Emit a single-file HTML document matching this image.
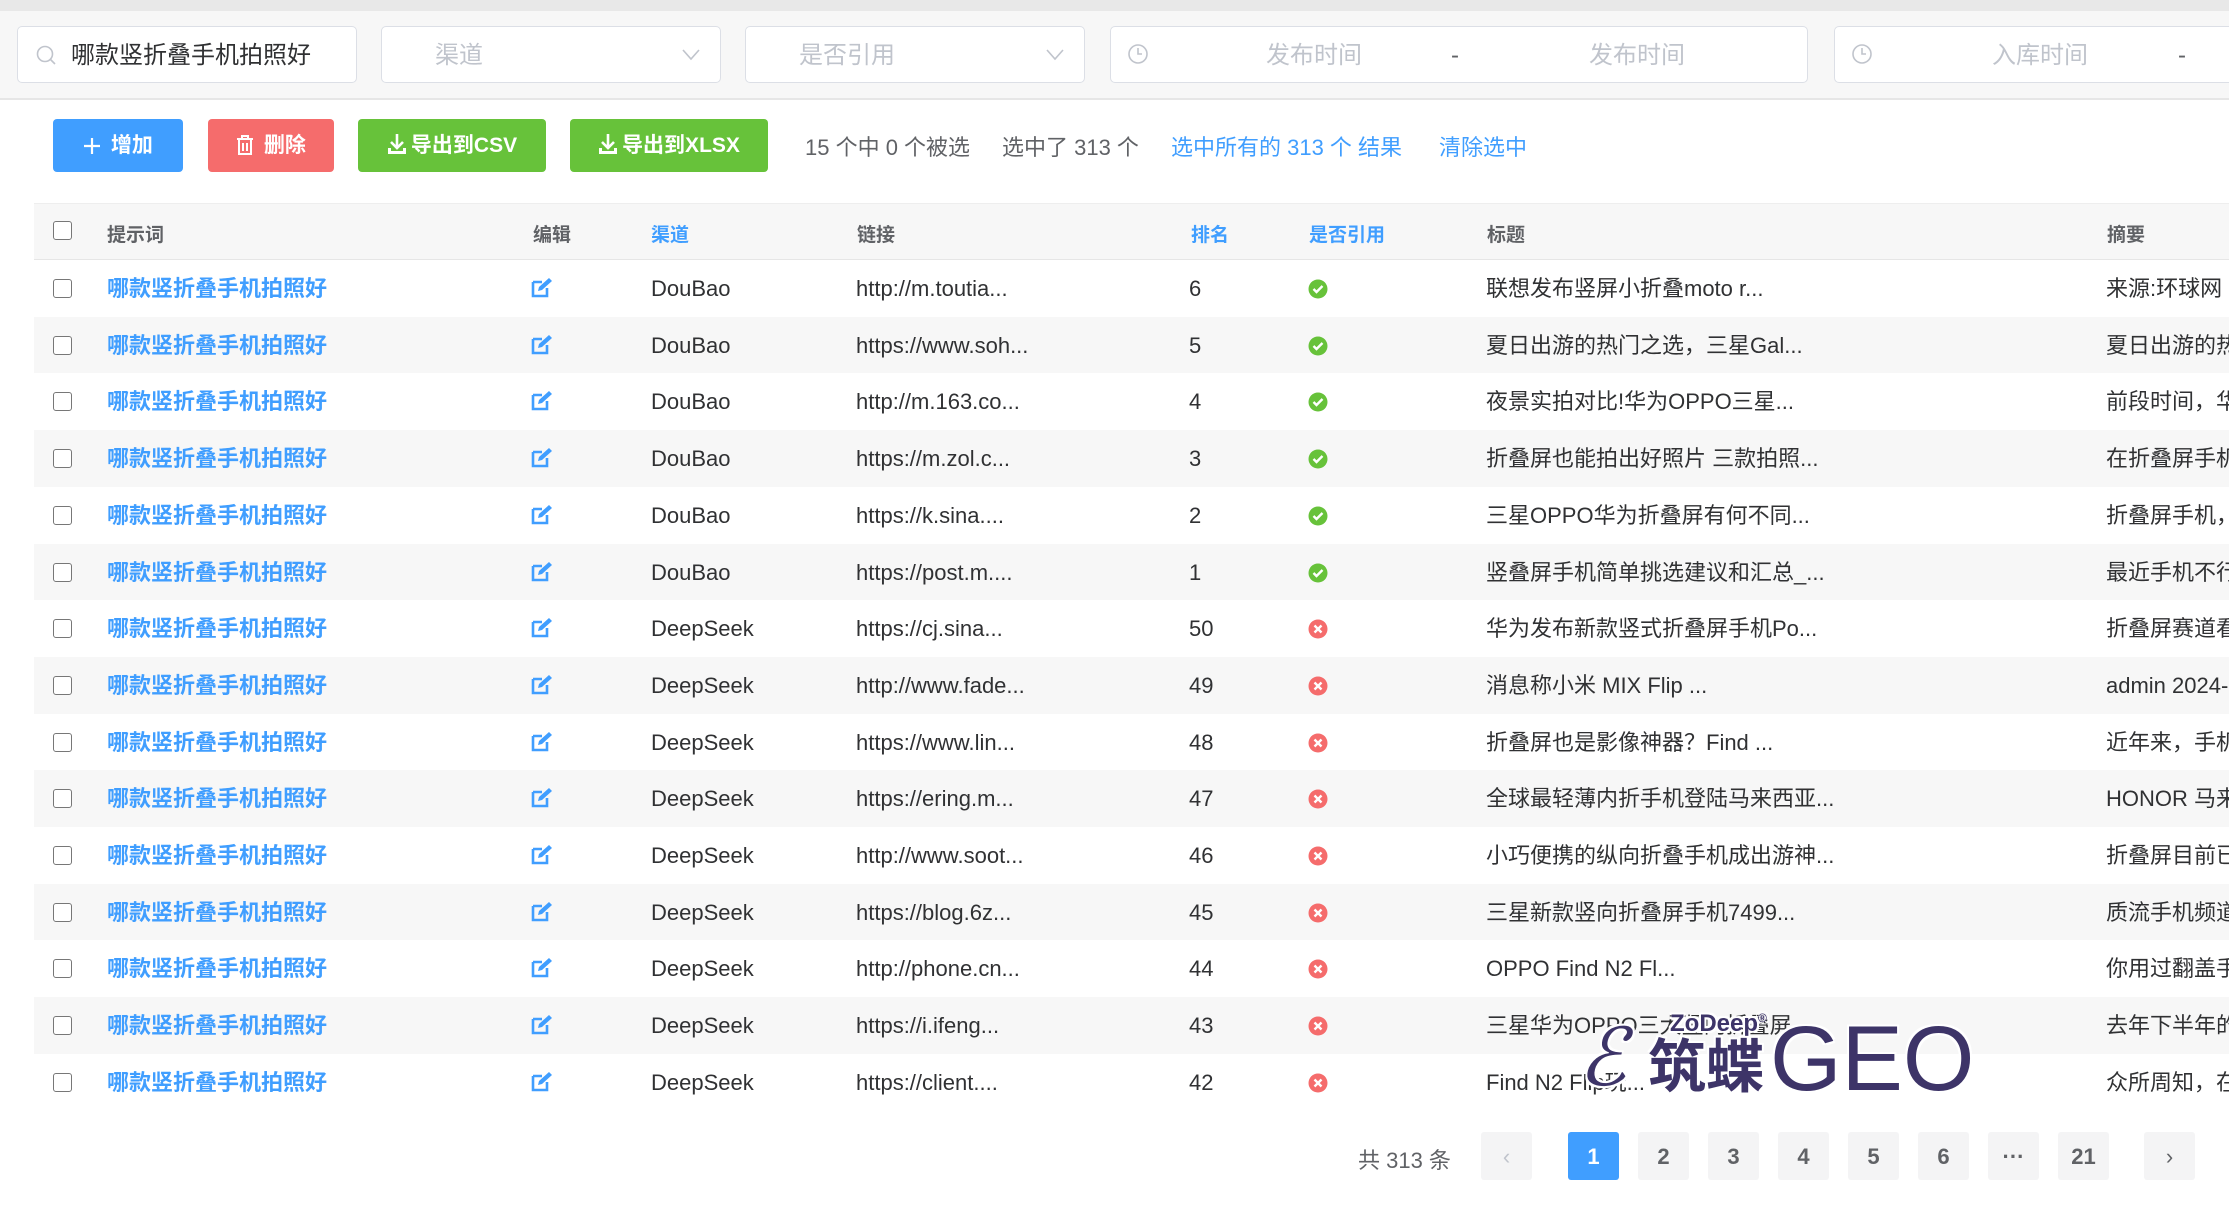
<!DOCTYPE html>
<html><head><meta charset="utf-8"><style>
*{box-sizing:border-box;margin:0;padding:0}
body{width:2229px;height:1226px;overflow:hidden;background:#fff;font-family:"Liberation Sans","Noto Sans CJK SC",sans-serif;color:#303133;position:relative}
.a{position:absolute}
.top{left:0;top:0;width:2229px;height:11px;background:#e8e8e8}
.filt{left:0;top:11px;width:2229px;height:89px;background:#f7f7f7;border-bottom:2px solid #e6e6e6}
.inp{top:26px;height:57px;background:#fff;border:1.5px solid #dcdfe6;border-radius:5px;font-size:24px;color:#c0c4cc;line-height:58px}
.btn{top:119px;height:53px;border-radius:4px;color:#fff;font-size:21px;font-weight:bold;line-height:53px;text-align:center}
.btn svg{vertical-align:-3px;margin-right:4px}
.info{top:130px;font-size:22px;color:#606266}
.hdr{left:34px;top:203px;width:2200px;height:57px;background:#f7f7f7;border-bottom:1.5px solid #e6e6e6;border-top:1.5px solid #eee}
.h{top:220px;font-size:19px;font-weight:bold;color:#606266}
.row{left:34px;width:2200px;height:57px}
.cell{position:absolute;font-size:22px;line-height:57px;white-space:nowrap}
.cb{position:absolute;left:19px;top:19px;width:19px;height:19px;border:1.5px solid #777;border-radius:3px;background:#fff}
.kw{left:73px;color:#409eff;font-weight:bold}
.ed{left:496px;top:17px;line-height:0}
.ed svg,.ct svg{display:block}
.ch{left:617px}.lk{left:822px}.rk{left:1155px}.ct{left:1274px;top:19px;line-height:0}.ti{left:1452px}.su{left:2072px}
.pg{top:1132px;width:51px;height:48px;background:#f4f4f5;border-radius:3px;text-align:center;line-height:50px;font-size:22px;font-weight:bold;color:#606266}
</style></head><body>
<div class="a top"></div>
<div class="a filt"></div>
<div class="a inp" style="left:17px;width:340px;color:#303133;padding-left:53px">哪款竖折叠手机拍照好
<svg class="a" style="left:17px;top:17px" width="22" height="22" viewBox="0 0 22 22"><circle cx="10" cy="10" r="7.5" fill="none" stroke="#c0c4cc" stroke-width="1.6"/><line x1="15.5" y1="15.5" x2="20" y2="20" stroke="#c0c4cc" stroke-width="1.6"/></svg></div>
<div class="a inp" style="left:381px;width:340px;padding-left:53px">渠道<svg class="a" style="right:20px;top:22px" width="18" height="12"><path d="M1 1l8 9 8-9" fill="none" stroke="#c0c4cc" stroke-width="1.6"/></svg></div>
<div class="a inp" style="left:745px;width:340px;padding-left:53px">是否引用<svg class="a" style="right:20px;top:22px" width="18" height="12"><path d="M1 1l8 9 8-9" fill="none" stroke="#c0c4cc" stroke-width="1.6"/></svg></div>
<div class="a inp" style="left:1110px;width:698px"><svg class="a" style="left:16px;top:15px" width="22" height="24"><circle cx="11" cy="12" r="9" fill="none" stroke="#c0c4cc" stroke-width="1.6"/><path d="M11 6v6h4" fill="none" stroke="#c0c4cc" stroke-width="1.6"/></svg><span class="a" style="left:155px">发布时间</span><span class="a" style="left:340px;color:#606266">-</span><span class="a" style="left:478px">发布时间</span></div>
<div class="a inp" style="left:1834px;width:420px"><svg class="a" style="left:16px;top:15px" width="22" height="24"><circle cx="11" cy="12" r="9" fill="none" stroke="#c0c4cc" stroke-width="1.6"/><path d="M11 6v6h4" fill="none" stroke="#c0c4cc" stroke-width="1.6"/></svg><span class="a" style="left:157px">入库时间</span><span class="a" style="left:343px;color:#606266">-</span></div>

<div class="a btn" style="left:53px;width:130px;background:#409eff"><svg width="18" height="18"><path d="M9 1v16M1 9h16" stroke="#fff" stroke-width="2.2"/></svg> 增加</div>
<div class="a btn" style="left:208px;width:126px;background:#f56c6c"><svg width="18" height="20"><path d="M1 4h16M6 4V1h6v3M3 4v15h12V4M7 8v8M11 8v8" fill="none" stroke="#fff" stroke-width="2"/></svg> 删除</div>
<div class="a btn" style="left:358px;width:188px;background:#67c23a"><svg width="20" height="22"><path d="M10 1v13M4 9l6 6 6-6" fill="none" stroke="#fff" stroke-width="2.6"/><path d="M1 15v6h18v-6h-3v3H4v-3z" fill="#fff"/></svg>导出到CSV</div>
<div class="a btn" style="left:570px;width:198px;background:#67c23a"><svg width="20" height="22"><path d="M10 1v13M4 9l6 6 6-6" fill="none" stroke="#fff" stroke-width="2.6"/><path d="M1 15v6h18v-6h-3v3H4v-3z" fill="#fff"/></svg>导出到XLSX</div>
<div class="a info" style="left:805px">15 个中 0 个被选</div>
<div class="a info" style="left:1002px">选中了 313 个</div>
<div class="a info" style="left:1171px;color:#409eff">选中所有的 313 个 结果</div>
<div class="a info" style="left:1439px;color:#409eff">清除选中</div>

<div class="a hdr"><div class="cb" style="top:17px"></div></div>
<div class="a h" style="left:107px">提示词</div>
<div class="a h" style="left:533px">编辑</div>
<div class="a h" style="left:651px;color:#409eff">渠道</div>
<div class="a h" style="left:857px">链接</div>
<div class="a h" style="left:1191px;color:#409eff">排名</div>
<div class="a h" style="left:1309px;color:#409eff">是否引用</div>
<div class="a h" style="left:1487px">标题</div>
<div class="a h" style="left:2107px">摘要</div>

<div id="rows"></div>
<script>
var d=[["DouBao","http://m.toutia...","6",1,"联想发布竖屏小折叠moto r...","来源:环球网"],
["DouBao","https://www.soh...","5",1,"夏日出游的热门之选，三星Gal...","夏日出游的热"],
["DouBao","http://m.163.co...","4",1,"夜景实拍对比!华为OPPO三星...","前段时间，华"],
["DouBao","https://m.zol.c...","3",1,"折叠屏也能拍出好照片 三款拍照...","在折叠屏手机"],
["DouBao","https://k.sina....","2",1,"三星OPPO华为折叠屏有何不同...","折叠屏手机，"],
["DouBao","https://post.m....","1",1,"竖叠屏手机简单挑选建议和汇总_...","最近手机不行"],
["DeepSeek","https://cj.sina...","50",0,"华为发布新款竖式折叠屏手机Po...","折叠屏赛道看"],
["DeepSeek","http://www.fade...","49",0,"消息称小米 MIX Flip ...","admin 2024-"],
["DeepSeek","https://www.lin...","48",0,"折叠屏也是影像神器？Find ...","近年来，手机"],
["DeepSeek","https://ering.m...","47",0,"全球最轻薄内折手机登陆马来西亚...","HONOR 马来"],
["DeepSeek","http://www.soot...","46",0,"小巧便携的纵向折叠手机成出游神...","折叠屏目前已"],
["DeepSeek","https://blog.6z...","45",0,"三星新款竖向折叠屏手机7499...","质流手机频道"],
["DeepSeek","http://phone.cn...","44",0,"OPPO Find N2 Fl...","你用过翻盖手"],
["DeepSeek","https://i.ifeng...","43",0,"三星华为OPPO三大竖向折叠屏...","去年下半年的"],
["DeepSeek","https://client....","42",0,"Find N2 Flip玩...","众所周知，在"]];
var h="";
var edit='<svg width="24" height="22" viewBox="0 0 24 22"><path d="M3 5h9M3 5v14h14v-8" fill="none" stroke="#409eff" stroke-width="2.6"/><path d="M8 14l1-4 10-9 3 3-10 9z" fill="#409eff"/></svg>';
var ok='<svg width="20" height="20"><circle cx="10" cy="10" r="9.5" fill="#67c23a"/><path d="M5.5 10l3 3 6-6" fill="none" stroke="#fff" stroke-width="2.4"/></svg>';
var no='<svg width="20" height="20"><circle cx="10" cy="10" r="9.5" fill="#f56c6c"/><path d="M6.5 6.5l7 7M13.5 6.5l-7 7" stroke="#fff" stroke-width="2.4"/></svg>';
for(var i=0;i<d.length;i++){var r=d[i];var t=260+i*56.7;
h+='<div class="a row" style="top:'+t+'px;background:'+(i%2?'#f7f7f7':'#fff')+'"><div class="cb"></div><div class="cell kw">哪款竖折叠手机拍照好</div><div class="cell ed">'+edit+'</div><div class="cell ch">'+r[0]+'</div><div class="cell lk">'+r[1]+'</div><div class="cell rk">'+r[2]+'</div><div class="cell ct">'+(r[3]?ok:no)+'</div><div class="cell ti">'+r[4]+'</div><div class="cell su">'+r[5]+'</div></div>';}
document.getElementById("rows").innerHTML=h;
</script>

<div class="a" style="left:1578px;top:1010px;width:420px;height:95px;font-family:'Liberation Sans','Noto Sans CJK SC',sans-serif;color:#3d3468;text-shadow:-2px -2px 0 #fff,2px -2px 0 #fff,-2px 2px 0 #fff,2px 2px 0 #fff">
<span class="a" style="left:0;top:0;font-size:80px;font-style:italic;line-height:95px">ℰ</span>
<span class="a" style="left:92px;top:0;font-size:24px;font-weight:bold">ZoDeep<sup style="font-size:12px">®</sup></span>
<span class="a" style="left:70px;top:26px;font-size:58px;font-weight:bold;line-height:64px">筑蝶</span>
<span class="a" style="left:192px;top:2px;font-size:92px;line-height:95px">GEO</span>
</div>

<div class="a" style="left:1358px;top:1143px;font-size:22px;color:#606266">共 313 条</div>
<div class="a pg" style="left:1481px;color:#c0c4cc;font-weight:normal">‹</div>
<div class="a pg" style="left:1568px;background:#409eff;color:#fff">1</div>
<div class="a pg" style="left:1638px">2</div>
<div class="a pg" style="left:1708px">3</div>
<div class="a pg" style="left:1778px">4</div>
<div class="a pg" style="left:1848px">5</div>
<div class="a pg" style="left:1918px">6</div>
<div class="a pg" style="left:1988px">···</div>
<div class="a pg" style="left:2058px">21</div>
<div class="a pg" style="left:2144px;font-weight:normal">›</div>
</body></html>
